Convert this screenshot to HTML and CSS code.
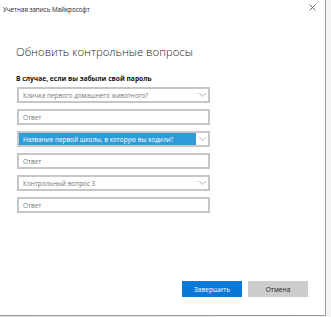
FILE: index.html
```html
<!DOCTYPE html>
<html lang="ru">
<head>
<meta charset="utf-8">
<link rel="stylesheet" href="styles.css">
</head>
<body>
<div class="window">
  <div class="titlebar">
    <span class="title">Учетная запись Майкрософт</span>
    <svg class="close" width="7" height="7" viewBox="0 0 7 7"><path d="M0.5 0.5L6.5 6.5M6.5 0.5L0.5 6.5" stroke="#555" stroke-width="0.9"/></svg>
  </div>
  <div class="content">
    <h1 class="heading">Обновить контрольные вопросы</h1>
    <div class="sub">В случае, если вы забыли свой пароль</div>
    <div class="fields">
      <div class="field select"><span class="val">Кличка первого домашнего животного?</span><span class="arrow"><svg width="7" height="4" viewBox="0 0 7 4"><path d="M0.3 0.3L3.5 3.3L6.7 0.3" fill="none" stroke="#999" stroke-width="0.8"/></svg></span></div>
      <div class="field"><span class="val">Ответ</span></div>
      <div class="field select active"><span class="val">Название первой школы, в которую вы ходили?</span><span class="arrow"><svg width="7" height="4" viewBox="0 0 7 4"><path d="M0.3 0.3L3.5 3.3L6.7 0.3" fill="none" stroke="#999" stroke-width="0.8"/></svg></span></div>
      <div class="field"><span class="val">Ответ</span></div>
      <div class="field select"><span class="val">Контрольный вопрос 3</span><span class="arrow"><svg width="7" height="4" viewBox="0 0 7 4"><path d="M0.3 0.3L3.5 3.3L6.7 0.3" fill="none" stroke="#999" stroke-width="0.8"/></svg></span></div>
      <div class="field"><span class="val">Ответ</span></div>
    </div>
    <div class="buttons">
      <button class="btn primary">Завершить</button>
      <button class="btn secondary">Отмена</button>
    </div>
  </div>
</div>
</body>
</html>
```
FILE: styles.css
```css
html, body {
  margin: 0;
  padding: 0;
}
body {
  width: 331px;
  height: 317px;
  background: linear-gradient(to right, #e2e2e2, #f4f4f4);
  font-family: "Open Sans", "Noto Sans", sans-serif;
  overflow: hidden;
}
.window {
  width: 325px;
  height: 315px;
  background: #fff;
  border-right: 1px solid #9a9a9a;
  border-bottom: 1px solid #9a9a9a;
  display: flex;
  flex-direction: column;
}
.titlebar {
  height: 18px;
  display: flex;
  align-items: center;
  justify-content: space-between;
  padding: 0 9px 0 3px;
}
.title {
  font-size: 6.3px;
  color: #222;
  letter-spacing: -0.05px;
}
.close {
  display: block;
  margin-top: -3px;
}
.content {
  flex: 1;
  display: flex;
  flex-direction: column;
  padding: 0 17px 18px 16px;
}
.heading {
  margin: 26px 0 0 0;
  font-size: 11.3px;
  line-height: 16px;
  font-weight: 300;
  color: #222;
  letter-spacing: 0;
}
.sub {
  margin-top: 14px;
  font-size: 6.7px;
  line-height: 10px;
  font-weight: 700;
  color: #111;
}
.fields {
  margin-top: 3px;
  margin-left: 1px;
  display: flex;
  flex-direction: column;
  gap: 6px;
}
.field {
  box-sizing: border-box;
  width: 193px;
  height: 16px;
  border: 2px solid #c6c6c6;
  display: flex;
  align-items: stretch;
  font-size: 6.4px;
  color: #767676;
}
.val {
  flex: 1;
  display: flex;
  align-items: center;
  padding-left: 4px;
  white-space: nowrap;
  overflow: hidden;
}
.arrow {
  width: 12px;
  display: flex;
  align-items: center;
  justify-content: center;
  background: #fff;
}
.active .val {
  background: #2f9bd8;
  color: #fff;
}
.buttons {
  margin-top: auto;
  display: flex;
  justify-content: flex-end;
  gap: 6px;
}
.btn {
  width: 60px;
  height: 16px;
  border: none;
  padding: 0;
  font-family: inherit;
  font-size: 6.6px;
}
.primary {
  background: #0a78d7;
  color: #fff;
}
.secondary {
  background: #cccccc;
  color: #222;
}
```
